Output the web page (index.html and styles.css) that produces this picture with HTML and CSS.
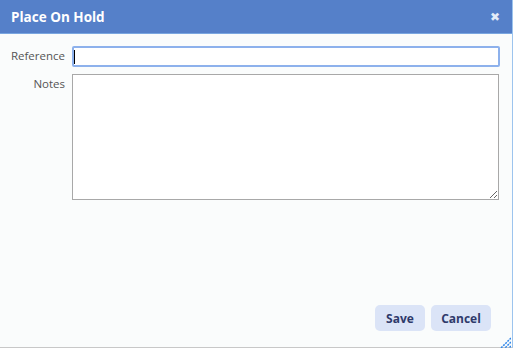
FILE: index.html
```html
<!DOCTYPE html>
<html>
<head lang="en">
    <meta charset="UTF-8">
    <title>Place On Hold</title>
    <link rel="stylesheet" href="styles.css">
</head>
<body>
<div class="dialog">
    <div class="titlebar">
        <span class="title">Place On Hold</span>
        <span class="close">&#10006;</span>
    </div>
    <div class="content">
        <div class="row">
            <label class="label">Reference</label>
            <div class="ref-wrap">
                <input class="field ref" type="text" autofocus>
                <span class="caret"></span>
            </div>
        </div>
        <div class="row">
            <label class="label">Notes</label>
            <textarea class="field notes"></textarea>
        </div>
    </div>
    <div class="buttons">
        <button class="btn save">Save</button>
        <button class="btn cancel">Cancel</button>
    </div>
    <div class="grip">
        <svg width="12" height="12" viewBox="0 0 12 12">
            <path d="M12 1 L1 12 M12 5 L5 12 M12 9 L9 12" stroke="#2f86ea" stroke-width="1.5" stroke-dasharray="2 1"/>
        </svg>
    </div>
</div>
</body>
</html>
```

FILE: styles.css
```css
*{
    margin: 0;
    padding: 0;
    box-sizing: border-box;
}
body{
    background: #ffffff;
    font-family: "Open Sans", "DejaVu Sans", sans-serif;
}
.dialog{
    width: 513px;
    height: 348px;
    background: #fafcfc;
    border-right: 1px solid #9cc4ee;
    border-bottom: 1px solid #c8c8c8;
    display: flex;
    flex-direction: column;
    position: relative;
}
.titlebar{
    height: 34px;
    background: #5580c9;
    border-bottom: 1px solid #79a6e0;
    display: flex;
    align-items: center;
    justify-content: space-between;
    padding: 0 12px 0 11px;
    color: #fff;
}
.title{
    font-size: 13.5px;
    font-weight: bold;
}
.close{
    font-size: 12px;
    font-weight: bold;
    color: #e4ecf8;
}
.content{
    padding: 12px 13px 0 0;
    display: flex;
    flex-direction: column;
    gap: 7px;
}
.row{
    display: flex;
    align-items: flex-start;
}
.label{
    width: 72px;
    flex: none;
    text-align: right;
    padding-right: 7px;
    font-size: 11.5px;
    color: #555;
    line-height: 18px;
    margin-top: 1px;
}
.field{
    font-family: inherit;
    font-size: 12px;
    background: #fff;
    outline: none;
}
.ref-wrap{
    position: relative;
}
.ref{
    display: block;
    width: 428px;
    height: 21px;
    border: 2px solid #8db1ec;
    border-radius: 2px;
    padding: 0 4px;
}
.caret{
    position: absolute;
    left: 2px;
    top: 4px;
    width: 1px;
    height: 14px;
    background: #000;
}
.notes{
    width: 429px;
    height: 126px;
    border: 1px solid #a8a8a8;
    resize: both;
}
.buttons{
    margin-top: auto;
    display: flex;
    justify-content: flex-end;
    gap: 6px;
    padding: 0 21px 16px 0;
}
.btn{
    height: 26px;
    border: none;
    border-radius: 5px;
    background: #dbe4f7;
    color: #2f3a6b;
    font-family: inherit;
    font-size: 12px;
    font-weight: bold;
}
.save{
    width: 50px;
}
.cancel{
    width: 60px;
}
.grip{
    position: absolute;
    right: 1px;
    bottom: 3px;
    width: 12px;
    height: 12px;
}
```
